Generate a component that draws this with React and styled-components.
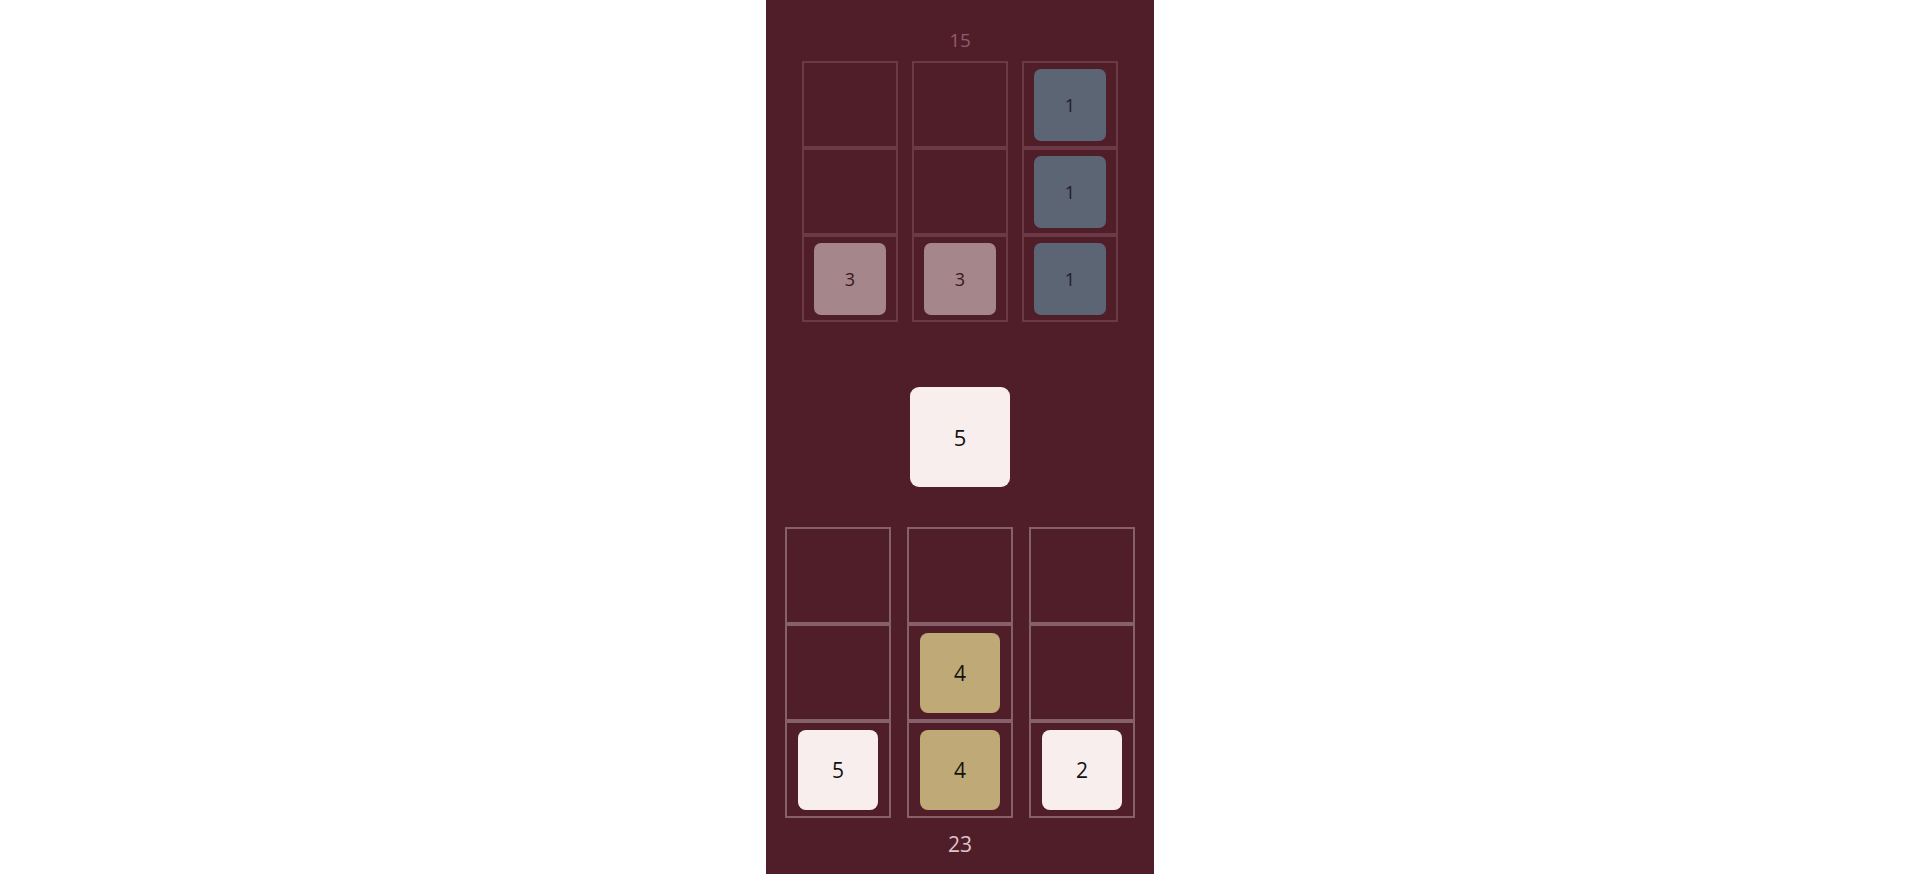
import React from 'react';
import styled, { createGlobalStyle } from 'styled-components';

const GlobalStyle = createGlobalStyle`
  html, body {
    margin: 0;
    padding: 0;
    background: #ffffff;
    font-family: "Open Sans", "Noto Sans", "Liberation Sans", sans-serif;
  }
`;

const Table = styled.div`
  width: 388px;
  height: 874px;
  margin: 0 auto;
  background: #501e29;
  display: flex;
  flex-direction: column;
  align-items: center;
  box-sizing: border-box;
  padding-top: 28px;
`;

const Score = styled.div`
  font-size: ${p => (p.mine ? '21px' : '19px')};
  line-height: ${p => (p.mine ? '28px' : '24px')};
  color: ${p => (p.mine ? '#dcc3cd' : '#8e5d6a')};
  text-align: center;
  margin-top: ${p => p.top || 0}px;
`;

const Board = styled.div`
  display: flex;
  gap: ${p => p.gap}px;
  margin-top: ${p => p.top}px;
`;

const Column = styled.div`
  display: flex;
  flex-direction: column;
`;

const Cell = styled.div`
  box-sizing: border-box;
  width: ${p => p.w}px;
  height: ${p => p.h}px;
  border: 2px solid ${p => p.line};
  display: flex;
  align-items: center;
  justify-content: center;
`;

const Die = styled.div`
  width: ${p => p.size}px;
  height: ${p => p.size}px;
  border-radius: ${p => (p.size > 75 ? 8 : 7)}px;
  background: ${p => p.bg};
  color: ${p => p.fg};
  font-size: ${p => (p.size > 75 ? 21 : 18)}px;
  display: flex;
  align-items: center;
  justify-content: center;
`;

const Pending = styled.div`
  margin-top: 65px;
  width: 100px;
  height: 100px;
  border-radius: 9px;
  background: #f9eeee;
  color: #111;
  font-size: 22px;
  display: flex;
  align-items: center;
  justify-content: center;
`;

const tones = {
  white: { bg: '#f9eeee', fg: '#111111' },
  gold: { bg: '#bea977', fg: '#15120c' },
  rose: { bg: '#a5878b', fg: '#3b1620' },
  slate: { bg: '#5b6574', fg: '#231c25' },
};

const opponent = [
  [null, null, { v: 3, t: 'rose' }],
  [null, null, { v: 3, t: 'rose' }],
  [{ v: 1, t: 'slate' }, { v: 1, t: 'slate' }, { v: 1, t: 'slate' }],
];

const player = [
  [null, null, { v: 5, t: 'white' }],
  [null, { v: 4, t: 'gold' }, { v: 4, t: 'gold' }],
  [null, null, { v: 2, t: 'white' }],
];

const Grid = ({ cols, w, h, gap, die, line, top }) => (
  <Board gap={gap} top={top}>
    {cols.map((col, i) => (
      <Column key={i}>
        {col.map((d, j) => (
          <Cell key={j} w={w} h={h} line={line}>
            {d && (
              <Die size={die} bg={tones[d.t].bg} fg={tones[d.t].fg}>
                {d.v}
              </Die>
            )}
          </Cell>
        ))}
      </Column>
    ))}
  </Board>
);

const App = () => (
  <>
    <GlobalStyle />
    <Table>
      <Score>15</Score>
      <Grid cols={opponent} w={96} h={87} gap={14} die={72} line="#6b3a46" top={9} />
      <Pending>5</Pending>
      <Grid cols={player} w={106} h={97} gap={16} die={80} line="#86616b" top={40} />
      <Score mine top={12}>23</Score>
    </Table>
  </>
);

export default App;
